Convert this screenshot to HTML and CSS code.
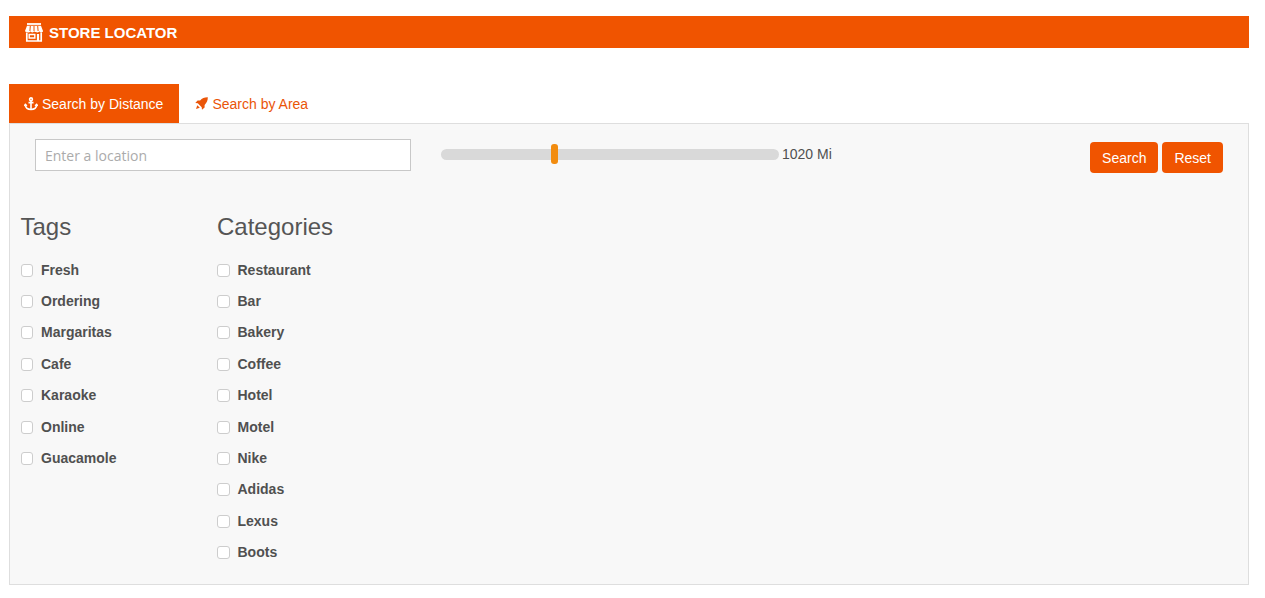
FILE: index.html
```html
<!DOCTYPE html>
<html lang="en">
<head>
    <meta charset="UTF-8">
    <meta name="viewport" content="width=device-width, initial-scale=1.0">
    <title>Store Locator</title>
    <link rel="stylesheet" href="styles.css">
</head>
<body>
    <header class="title-bar">
        <svg class="store-icon" width="20" height="19" viewBox="0 0 20 19" fill="none" stroke="#fff">
            <path d="M3 1h14" stroke-width="1.800"/>
            <path d="M3 2.800h14l2 5.200c0 1-1 1.400-1.800 1.400s-1.800-.4-1.800-1.400c0 1-1.200 1.400-2 1.400S10 9 10 8c0 1-.8 1.400-1.600 1.400S6.400 9 6.400 8c0 1-.8 1.400-1.600 1.400S1 9 1 8z" fill="#fff" stroke="none"/>
            <path d="M6.300 3 5.900 8M10 3v5M13.700 3l.4 5" stroke="#f05400" stroke-width="1"/>
            <path d="M2.800 9.500V18h14.400V9.500" stroke-width="1.700"/>
            <path d="M5.200 11.500h5.600V15H5.200z" stroke-width="1.400"/>
            <path d="M14 11v7" stroke-width="2.200"/>
        </svg>
        <span>STORE LOCATOR</span>
    </header>

    <nav class="tabs">
        <a class="tab active" href="#">
            <svg class="tab-icon" width="14" height="14" viewBox="0 0 14 14" fill="none" stroke="#fff" stroke-width="1.600">
                <circle cx="7" cy="2.300" r="1.400"/>
                <path d="M7 3.500V12.500M4.500 5.600h5"/>
                <path d="M1.300 8.200c.3 2.700 2.800 4.300 5.700 4.300s5.400-1.600 5.700-4.300"/>
                <path d="M0 9l1.300-1.800L3 8.800M11 8.800l1.700-1.600L14 9" stroke-width="1.200"/>
            </svg>
            Search by Distance
        </a>
        <a class="tab" href="#">
            <svg class="tab-icon" width="13" height="13" viewBox="0 0 13 13" fill="#ea5508">
                <path d="M12.800.2C9.800.1 7 1.300 5.100 3.400H2.600L.3 6l2.500.3 3.900 3.900.3 2.500 2.600-2.300V7.900C11.700 6 12.900 3.200 12.800.2z"/>
                <path d="M2.300 8.200 4.800 10.700 1 12z"/>
            </svg>
            Search by Area
        </a>
    </nav>

    <main class="panel">
        <form class="search-row">
            <input class="location" type="text" placeholder="Enter a location">
            <div class="slider">
                <div class="track"><span class="thumb"></span></div>
                <span class="distance">1020 Mi</span>
            </div>
            <div class="buttons">
                <button type="button">Search</button>
                <button type="button">Reset</button>
            </div>
        </form>

        <div class="filters">
            <section class="filter tags">
                <h2>Tags</h2>
                <label><input type="checkbox">Fresh</label>
                <label><input type="checkbox">Ordering</label>
                <label><input type="checkbox">Margaritas</label>
                <label><input type="checkbox">Cafe</label>
                <label><input type="checkbox">Karaoke</label>
                <label><input type="checkbox">Online</label>
                <label><input type="checkbox">Guacamole</label>
            </section>
            <section class="filter">
                <h2>Categories</h2>
                <label><input type="checkbox">Restaurant</label>
                <label><input type="checkbox">Bar</label>
                <label><input type="checkbox">Bakery</label>
                <label><input type="checkbox">Coffee</label>
                <label><input type="checkbox">Hotel</label>
                <label><input type="checkbox">Motel</label>
                <label><input type="checkbox">Nike</label>
                <label><input type="checkbox">Adidas</label>
                <label><input type="checkbox">Lexus</label>
                <label><input type="checkbox">Boots</label>
            </section>
        </div>
    </main>
</body>
</html>
```

FILE: styles.css
```css
body { font-family: "Liberation Sans", Arial, sans-serif; margin: 16px 16px 0 9px; color: #505050; background: #fff; }

.title-bar { display: flex; align-items: center; gap: 5px; height: 32px; padding-left: 15px; background: #f05400; color: #fff; font-size: 15px; font-weight: bold; }

.tabs { display: flex; margin-top: 36px; }
.tab { display: flex; align-items: center; gap: 4px; height: 39px; padding: 0 16px 0 15px; font-size: 14px; color: #ea5508; text-decoration: none; }
.tab.active { background: #f05400; color: #fff; }
.tab + .tab { padding-left: 16px; }

.panel { height: 460px; background: #f8f8f8; border: 1px solid #dedede; padding: 0 25px 0 10.500px; }

.search-row { display: flex; align-items: flex-start; padding-top: 15px; padding-left: 14.500px; }
.location { box-sizing: border-box; width: 376px; height: 32px; padding: 0 9px; background: #fff; border: 1px solid #c8c8c8; font-family: "Open Sans", sans-serif; font-size: 14px; color: #333; }
.location::placeholder { color: #ababab; opacity: 1; }

.slider { display: flex; align-items: center; margin-left: 30px; height: 30px; }
.track { position: relative; width: 338px; height: 11px; border-radius: 6px; background: #d9d9d9; }
.thumb { position: absolute; left: 110px; top: -5px; width: 7px; height: 20px; border-radius: 3px; background: #f28c0f; }
.distance { margin-left: 3px; font-size: 14px; }

.buttons { display: flex; gap: 4px; margin-left: auto; padding-top: 3px; }
.buttons button { height: 31px; padding: 0 12px; border: none; border-radius: 4px; background: #f05400; color: #fff; font-family: inherit; font-size: 14px; }

.filters { display: flex; margin-top: 39px; }
.filter { display: flex; flex-direction: column; }
.tags { width: 196.500px; }
.filter h2 { margin: 0 0 12px; font-size: 24px; font-weight: normal; line-height: 30px; color: #555; }
.filter label { display: flex; align-items: center; height: 31.400px; font-size: 14px; font-weight: bold; }
.filter input { appearance: none; box-sizing: border-box; width: 12.500px; height: 13px; margin: 1px 8px 0 0; background: #fff; border: 1px solid #cdcdcd; border-radius: 3px; }
```
